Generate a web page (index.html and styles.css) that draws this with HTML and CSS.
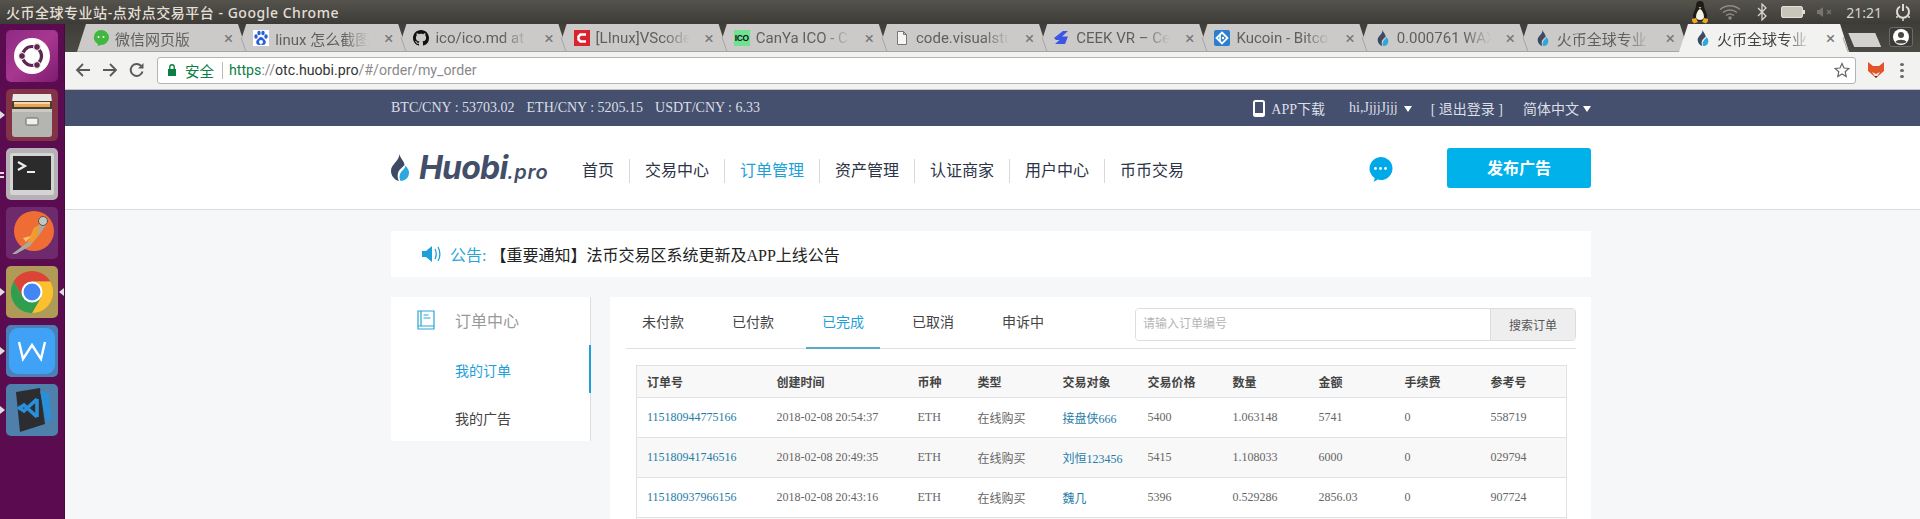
FILE: index.html
```html
<!DOCTYPE html>
<html lang="zh-CN">

<head>
  <meta charset="UTF-8">
  <meta name="viewport" content="width=device-width, initial-scale=1.0">
  <title>火币全球专业站-点对点交易平台</title>
  <link rel="stylesheet" href="styles.css">
</head>

<body>
  <svg class="defs" width="0" height="0">
    <symbol id="flame" viewBox="0 0 16 24">
      <path fill="#3e4a64" d="M7.500 0C8 4 12 6 12 10 10 12 6.500 14 6 18c-.2 2 0 4 1 6-4-1-7-5-7-9C0 9 7 7 7.500 0z" />
      <path fill="#2ea7e0" d="M13 10.500c1.500 2 3 3.500 3 6 0 4.500-3 7.500-7.500 7.500-1-2-1.300-4-.5-6 1-3 4-4 5-7.500z" />
    </symbol>
  </svg>

  <header class="desk-bar">
    <span class="desk-title">火币全球专业站-点对点交易平台 - Google Chrome</span>
    <div class="indicators">
      <svg class="ind-tux" width="18" height="24" viewBox="0 0 18 24">
        <path fill="#1c1c1c" d="M9 1c-3 0-4 2-4 5 0 3-3 6-3 10 0 3 2 5 7 5s7-2 7-5c0-4-3-7-3-10 0-3-1-5-4-5z" />
        <path fill="#f4f1e6" d="M9 9c-2 1-4 4-4 8 0 2 2 3 4 3s4-1 4-3c0-4-2-7-4-8z" />
        <path fill="#f0a81c" d="M1 19l4-1 2 4-4 1.500L1 21zM17 19l-4-1-2 4 4 1.500 2-2.500zM7.500 7h3L9 9z" />
      </svg>
      <svg class="ind-wifi" width="22" height="16" viewBox="0 0 22 16" fill="none" stroke="#8f8d86" stroke-width="1.500">
        <path d="M1 5.500c6-5 14-5 20 0M4 8.500c4-3.500 10-3.500 14 0M7 11.500c2.500-2 5.500-2 8 0" />
        <circle cx="11" cy="14" r="1" fill="#8f8d86" />
      </svg>
      <svg class="ind-bt" width="10" height="18" viewBox="0 0 10 18" fill="none" stroke="#d8d5cc" stroke-width="1.300">
        <path d="M1 5l8 8-4 4V1l4 4-8 8" />
      </svg>
      <span class="ind-battery"></span>
      <svg class="ind-sound" width="18" height="12" viewBox="0 0 18 12" fill="#77756e">
        <path d="M1 4h2l4-3v10L3 8H1z" />
        <path d="M11 4l4 4m0-4l-4 4" stroke="#77756e" stroke-width="1.200" />
      </svg>
      <span class="ind-time">21:21</span>
      <svg class="ind-power" width="16" height="18" viewBox="0 0 16 18" fill="none" stroke="#dfdbd2" stroke-width="2">
        <path d="M5 3.500a6 6 0 1 0 6 0M8 1v7" />
        <path d="M1 14h2M13 14h2M8 15v3" stroke-width="1.500" />
      </svg>
    </div>
  </header>

  <div class="desk">
    <nav class="launcher">
      <div class="tile tile-ubuntu">
        <svg width="40" height="40" viewBox="0 0 40 40">
          <circle cx="20" cy="20" r="18" fill="#fff" />
          <circle cx="20" cy="20" r="9.500" fill="none" stroke="#5e2750" stroke-width="3.200" />
          <circle cx="25" cy="11" r="3.400" fill="#5e2750" stroke="#fff" />
          <circle cx="25" cy="29" r="3.400" fill="#5e2750" stroke="#fff" />
          <circle cx="10" cy="20" r="3.400" fill="#5e2750" stroke="#fff" />
        </svg>
      </div>
      <div class="tile tile-files pip-left">
        <svg width="44" height="46" viewBox="0 0 44 46">
          <path fill="#e9e9e6" d="M3 2h38l1 8H2z" />
          <path fill="#4a3c30" d="M2 9h40v8H2z" />
          <path fill="#e8a558" d="M4 11h36v4H4z" />
          <path fill="#f6d9a8" d="M4 10h36v2H4z" />
          <path fill="#b4b4b0" d="M2 17h40v25a3 3 0 0 1-3 3H5a3 3 0 0 1-3-3z" />
          <path fill="#c9c9c5" d="M2 17h40v3H2z" />
          <rect x="16" y="26" width="12" height="7" rx="1" fill="#eee" stroke="#666" />
        </svg>
      </div>
      <div class="tile tile-term pip-dots">
        <svg width="46" height="44" viewBox="0 0 46 44">
          <rect x="1" y="1" width="44" height="42" rx="2" fill="#d4d4d2" />
          <rect x="4" y="4" width="38" height="34" fill="#2b2b2b" />
          <path d="M9 10l7 4-7 4" fill="none" stroke="#eee" stroke-width="2.200" />
          <path d="M18 20h8" stroke="#eee" stroke-width="2" />
        </svg>
      </div>
      <div class="tile tile-postman">
        <svg width="46" height="46" viewBox="0 0 46 46">
          <circle cx="25" cy="21" r="20" fill="#ef6c35" />
          <path d="M3 44l16-12 6-14 9-6 3 3-7 10-9 11-14 8z" fill="#a9a9a4" />
          <path d="M19 32l6-14 6-3-3 12-5 6z" fill="#f39a2b" />
          <path d="M14 28l8-2-5 6z" fill="#f9c36a" />
          <circle cx="34" cy="11" r="4.500" fill="#c6c6c0" stroke="#555" />
        </svg>
      </div>
      <div class="tile tile-chrome pip-left pip-right">
        <svg width="46" height="46" viewBox="0 0 48 48">
          <path fill="#db4437" d="M24 13h19.050A22 22 0 0 0 4.950 13L14.500 29.500z" />
          <path fill="#fbc02d" d="M43.050 13A22 22 0 0 1 24 46l9.500-16.500L24 13z" />
          <path fill="#2f9e4f" d="M24 46A22 22 0 0 1 4.950 13l9.550 16.500h19z" />
          <circle cx="24" cy="24" r="11" fill="#fff" />
          <circle cx="24" cy="24" r="8.800" fill="#4285f4" />
        </svg>
      </div>
      <div class="tile tile-wps pip-left">
        <svg width="48" height="48" viewBox="0 0 48 48">
          <rect x="1" y="1" width="46" height="46" rx="9" fill="#3fa2f7" />
          <path d="M11 15l4 17 9-14 9 14 4-17" fill="none" stroke="#fff" stroke-width="2.400" />
        </svg>
      </div>
      <div class="tile tile-code pip-left">
        <svg width="44" height="48" viewBox="0 0 44 48">
          <path fill="#2b2d30" d="M6 6l24-4 5 36-25 8z" />
          <path fill="#2a8fdb" d="M30 5l9 3 2 26-27 5 22-4z" />
          <path fill="none" stroke="#2a8fdb" stroke-width="3.600" d="M27 13L14 25l-6-4M27 31L14 19l-6 4M27 13v18" />
        </svg>
      </div>
    </nav>

    <div class="chrome">
      <div class="tabstrip">
        <div class="tab">
          <svg class="favicon" viewBox="0 0 16 16">
            <path fill="#3fb83f" d="M8 0a8 7.500 0 0 1 0 15l-3.500 1 .5-2A8 7.500 0 0 1 8 0z" />
            <circle cx="5.500" cy="7" r="1" fill="#fff" /><circle cx="10.500" cy="7" r="1" fill="#fff" />
          </svg>
          <span class="tab-title">微信网页版</span><span class="tab-close">×</span>
        </div>
        <div class="tab">
          <svg class="favicon" viewBox="0 0 16 16">
            <rect width="16" height="16" fill="#fff" />
            <g fill="#2b5fd9">
              <ellipse cx="3" cy="6.500" rx="1.700" ry="2.200" /><ellipse cx="6" cy="3" rx="1.700" ry="2.300" />
              <ellipse cx="10" cy="3" rx="1.700" ry="2.300" /><ellipse cx="13" cy="6.500" rx="1.700" ry="2.200" />
              <path d="M8 7c2 0 2.500 2 4 3 1.500 1.500 1 5-2 5-1 0-1.500-.5-2-.5s-1 .5-2 .5c-3 0-3.500-3.500-2-5 1.500-1 2-3 4-3z" />
            </g>
            <ellipse cx="8" cy="12" rx="2" ry="2" fill="#fff" />
          </svg>
          <span class="tab-title">linux 怎么截图</span><span class="tab-close">×</span>
        </div>
        <div class="tab">
          <svg class="favicon" viewBox="0 0 16 16">
            <path fill="#111" d="M8 0C3.580 0 0 3.580 0 8c0 3.540 2.290 6.530 5.470 7.590.4.070.55-.17.55-.38 0-.19-.01-.82-.01-1.490-2.010.37-2.530-.49-2.690-.94-.09-.23-.48-.94-.82-1.130-.28-.15-.68-.52-.01-.53.630-.01 1.080.58 1.230.82.720 1.210 1.870.87 2.330.66.070-.52.28-.87.51-1.070-1.780-.2-3.640-.89-3.640-3.950 0-.87.31-1.590.82-2.150-.08-.2-.36-1.020.08-2.120 0 0 .67-.21 2.200.82.640-.18 1.320-.27 2-.27.680 0 1.360.09 2 .27 1.530-1.040 2.200-.82 2.200-.82.44 1.100.16 1.920.08 2.120.51.56.82 1.270.82 2.150 0 3.070-1.870 3.750-3.650 3.950.29.25.54.73.54 1.480 0 1.070-.01 1.930-.01 2.200 0 .21.15.46.55.38A8.013 8.013 0 0 0 16 8c0-4.420-3.580-8-8-8z" />
          </svg>
          <span class="tab-title">ico/ico.md at m</span><span class="tab-close">×</span>
        </div>
        <div class="tab">
          <svg class="favicon" viewBox="0 0 16 16">
            <rect width="16" height="16" fill="#d9232e" />
            <path d="M12 4.500H6.500L4.500 6.500v3l2 2H12" fill="none" stroke="#fff" stroke-width="2.500" />
          </svg>
          <span class="tab-title">[LInux]VScode</span><span class="tab-close">×</span>
        </div>
        <div class="tab">
          <span class="favicon fav-ico">ICO</span>
          <span class="tab-title">CanYa ICO - CA</span><span class="tab-close">×</span>
        </div>
        <div class="tab">
          <svg class="favicon" viewBox="0 0 16 16">
            <path d="M3.500 1.500h6l3 3v10h-9zM9.500 1.500v3h3" fill="#f5f5f5" stroke="#777" />
          </svg>
          <span class="tab-title">code.visualstu</span><span class="tab-close">×</span>
        </div>
        <div class="tab">
          <svg class="favicon" viewBox="0 0 16 16">
            <path fill="#3b55e6" d="M9 1h5L8 6.500h6L11 14H1l4.500-4H2L0 8z" />
          </svg>
          <span class="tab-title">CEEK VR – Cele</span><span class="tab-close">×</span>
        </div>
        <div class="tab">
          <svg class="favicon" viewBox="0 0 16 16">
            <rect width="16" height="16" rx="2" fill="#2a7fd0" />
            <path d="M8 2.500L13.500 8 8 13.500 2.500 8z" fill="none" stroke="#fff" stroke-width="1.800" />
            <path d="M6 5v6" stroke="#fff" stroke-width="1.600" />
            <circle cx="9" cy="8" r="1.200" fill="#fff" />
          </svg>
          <span class="tab-title">Kucoin - Bitcoi</span><span class="tab-close">×</span>
        </div>
        <div class="tab">
          <svg class="favicon"><use href="#flame" /></svg>
          <span class="tab-title">0.000761 WAX/</span><span class="tab-close">×</span>
        </div>
        <div class="tab">
          <svg class="favicon"><use href="#flame" /></svg>
          <span class="tab-title">火币全球专业</span><span class="tab-close">×</span>
        </div>
        <div class="tab tab-active">
          <svg class="favicon"><use href="#flame" /></svg>
          <span class="tab-title">火币全球专业</span><span class="tab-close">×</span>
        </div>
        <span class="tab-new"></span>
        <span class="profile">
          <svg width="16" height="16" viewBox="0 0 16 16">
            <circle cx="8" cy="8" r="8" fill="#fff" />
            <circle cx="8" cy="6" r="3" fill="#4a4842" />
            <path d="M2.500 13c1-3 10-3 11 0-3 2-8 2-11 0z" fill="#4a4842" />
          </svg>
        </span>
      </div>

      <div class="toolbar">
        <svg class="tool" width="16" height="16" viewBox="0 0 16 16" fill="none" stroke="#5a5a5a" stroke-width="1.800">
          <path d="M15 8H2M8 2L2 8l6 6" />
        </svg>
        <svg class="tool" width="16" height="16" viewBox="0 0 16 16" fill="none" stroke="#5a5a5a" stroke-width="1.800">
          <path d="M1 8h13M8 2l6 6-6 6" />
        </svg>
        <svg class="tool" width="16" height="16" viewBox="0 0 16 16" fill="none" stroke="#5a5a5a" stroke-width="2">
          <path d="M13.500 9.500A6 6 0 1 1 12 3.800" />
          <path d="M14.500 1v5.500H9" fill="#5a5a5a" stroke="none" />
        </svg>
        <div class="omnibox">
          <svg width="10" height="14" viewBox="0 0 10 14">
            <path fill="#0b8043" d="M1 6h8v7H1z" />
            <path d="M2.800 6V4a2.200 2.200 0 0 1 4.400 0v2" fill="none" stroke="#0b8043" stroke-width="1.400" />
          </svg>
          <span class="secure">安全</span>
          <span class="omni-line"></span>
          <span class="url"><span class="url-scheme">https</span>://<span class="url-host">otc.huobi.pro</span>/#/order/my_order</span>
          <svg class="omni-star" width="16" height="16" viewBox="0 0 16 16">
            <path d="M8 1.500l2 4.500 4.800.5-3.600 3.200 1 4.800L8 12l-4.200 2.500 1-4.800L1.200 6.500 6 6z" fill="none" stroke="#666" stroke-width="1.200" />
          </svg>
        </div>
        <svg class="ext-fox" width="18" height="18" viewBox="0 0 18 18">
          <path fill="#e0552a" d="M1 1l5 4h6l5-4v9l-8 7-8-7z" />
          <path fill="#f6e8dc" d="M5 11l4 2 4-2-4 6z" />
          <path fill="#40241a" d="M7.500 15h3L9 17z" />
        </svg>
        <span class="chrome-menu"><i></i><i></i><i></i></span>
      </div>

      <main class="page">
        <div class="rate-bar">
          <div class="wrap rate-inner">
            <div class="rates">
              <span>BTC/CNY : 53703.02</span>
              <span>ETH/CNY : 5205.15</span>
              <span>USDT/CNY : 6.33</span>
            </div>
            <div class="user-links">
              <a class="app-link">
                <svg width="12" height="17" viewBox="0 0 12 17">
                  <rect x="1" y="1" width="10" height="15" rx="1.500" fill="none" stroke="#fff" stroke-width="2" />
                  <path d="M1 13h10v2H1z" fill="#fff" />
                </svg>
                APP下载
              </a>
              <a class="user-name">hi,JjjjJjjj<i class="caret"></i></a>
              <a class="logout">[ 退出登录 ]</a>
              <a class="lang">简体中文<i class="caret"></i></a>
            </div>
          </div>
        </div>

        <div class="site-head">
          <div class="wrap head-inner">
            <div class="logo">
              <svg class="logo-flame"><use href="#flame" /></svg>
              <span class="logo-name">Huobi</span><span class="logo-pro">.pro</span>
            </div>
            <ul class="main-nav">
              <li>首页</li>
              <li>交易中心</li>
              <li class="active">订单管理</li>
              <li>资产管理</li>
              <li>认证商家</li>
              <li>用户中心</li>
              <li>币币交易</li>
            </ul>
            <svg class="chat-icon" width="25" height="25" viewBox="0 0 25 25">
              <path fill="#00a9e8" d="M12.500 0a12 11.500 0 0 1 0 23c-1 0-2-.1-3-.4-1 1-2.500 1.800-4 2 .8-1 1.200-2.200 1.200-3.500A11.500 11.500 0 0 1 12.500 0z" />
              <circle cx="7.500" cy="11.500" r="1.400" fill="#fff" />
              <circle cx="12.500" cy="11.500" r="1.400" fill="#fff" />
              <circle cx="17.500" cy="11.500" r="1.400" fill="#fff" />
            </svg>
            <button class="publish">发布广告</button>
          </div>
        </div>

        <div class="wrap notice">
          <svg width="20" height="16" viewBox="0 0 20 16">
            <path fill="#1d9fd8" d="M0 5h4l6-5v16l-6-5H0z" />
            <path fill="none" stroke="#1d9fd8" stroke-width="1.300" d="M13 3c1.500 3 1.500 7 0 10M16 1c2.500 4 2.500 10 0 14" />
          </svg>
          <span class="notice-label">公告:</span>
          <span class="notice-text">【重要通知】法币交易区系统更新及APP上线公告</span>
        </div>

        <div class="wrap columns">
          <aside class="side">
            <div class="side-title">
              <svg width="18" height="20" viewBox="0 0 18 20" fill="none" stroke="#2aa6d6" stroke-width="1.200">
                <path d="M1 1h16v15H1zM1 16v3h16v-3M4 1v15M6.500 5h5M6.500 8h7" />
              </svg>
              订单中心
            </div>
            <a class="side-item active">我的订单</a>
            <a class="side-item">我的广告</a>
          </aside>

          <section class="orders">
            <div class="order-top">
              <ul class="order-tabs">
                <li>未付款</li>
                <li>已付款</li>
                <li class="active">已完成</li>
                <li>已取消</li>
                <li>申诉中</li>
              </ul>
              <div class="search">
                <input class="search-input" type="text" placeholder="请输入订单编号">
                <button class="search-btn">搜索订单</button>
              </div>
            </div>

            <table class="order-table">
              <colgroup>
                <col class="c-id"><col class="c-time"><col class="c-coin"><col class="c-std"><col class="c-std"><col class="c-std">
                <col class="c-num"><col class="c-num"><col class="c-num"><col class="c-num">
              </colgroup>
              <thead>
                <tr>
                  <th>订单号</th><th>创建时间</th><th>币种</th><th>类型</th><th>交易对象</th>
                  <th>交易价格</th><th>数量</th><th>金额</th><th>手续费</th><th>参考号</th>
                </tr>
              </thead>
              <tbody>
                <tr>
                  <td><a>115180944775166</a></td><td>2018-02-08 20:54:37</td><td>ETH</td><td>在线购买</td><td><a>接盘侠666</a></td>
                  <td>5400</td><td>1.063148</td><td>5741</td><td>0</td><td>558719</td>
                </tr>
                <tr>
                  <td><a>115180941746516</a></td><td>2018-02-08 20:49:35</td><td>ETH</td><td>在线购买</td><td><a>刘恒123456</a></td>
                  <td>5415</td><td>1.108033</td><td>6000</td><td>0</td><td>029794</td>
                </tr>
                <tr>
                  <td><a>115180937966156</a></td><td>2018-02-08 20:43:16</td><td>ETH</td><td>在线购买</td><td><a>魏几</a></td>
                  <td>5396</td><td>0.529286</td><td>2856.03</td><td>0</td><td>907724</td>
                </tr>
                <tr class="row-cut">
                  <td></td><td></td><td></td><td></td><td></td><td></td><td></td><td></td><td></td><td></td>
                </tr>
              </tbody>
            </table>
          </section>
        </div>
      </main>
    </div>
  </div>
</body>

</html>
```

FILE: styles.css
```css
html {
  box-sizing: border-box;
  font-size: 14px;
}

*,
*:after,
*:before {
  box-sizing: inherit;
}

body {
  margin: 0;
  width: 1920px;
  height: 519px;
  overflow: hidden;
  display: flex;
  flex-direction: column;
  font-family: "Liberation Serif", "Noto Sans CJK SC", serif;
  color: #333;
}

ul {
  list-style: none;
  margin: 0;
  padding: 0;
}

.defs {
  position: absolute;
}

/* ubuntu top bar */
.desk-bar {
  flex: none;
  height: 24px;
  padding: 0 9px 0 6px;
  display: flex;
  align-items: center;
  justify-content: space-between;
  background: linear-gradient(#55534c, #3c3b37);
  color: #e3dfd6;
}

.desk-title {
  font-family: "Noto Sans", "Noto Sans CJK SC", sans-serif;
  font-size: 14px;
  font-weight: 500;
  letter-spacing: .52px;
}

.indicators {
  display: flex;
  align-items: center;
}

.ind-wifi {
  margin-left: 10px;
}

.ind-bt {
  margin-left: 16px;
}

.ind-battery {
  margin-left: 14px;
  width: 22px;
  height: 12px;
  border: 1px solid #e3dfd6;
  border-radius: 2px;
  background: #c9c5ba;
  position: relative;
}

.ind-battery:after {
  content: "";
  position: absolute;
  right: -3px;
  top: 3px;
  width: 2px;
  height: 4px;
  background: #e3dfd6;
}

.ind-sound {
  margin-left: 13px;
}

.ind-time {
  margin-left: 12px;
  font-family: "Noto Sans", sans-serif;
  font-size: 14px;
  color: #d8d5cc;
}

.ind-power {
  margin-left: 13px;
}

.desk {
  flex: 1;
  display: flex;
  min-height: 0;
}

/* launcher */
.launcher {
  flex: none;
  width: 65px;
  padding: 6px 0 0 6px;
  display: flex;
  flex-direction: column;
  gap: 7px;
  background: #5b0c50;
  border-right: 1px solid #47093f;
}

.tile {
  position: relative;
  width: 52px;
  height: 52px;
  border-radius: 5px;
  display: flex;
  align-items: center;
  justify-content: center;
}

.tile-ubuntu {
  background: linear-gradient(135deg, #8e2a84, #a8378f 50%, #7c1b70);
}

.tile-files {
  background: #823346;
}

.tile-term {
  background: #b6b1b6;
}

.tile-postman {
  background: #6d2a6c;
}

.tile-chrome {
  background: #b09a58;
}

.tile-wps {
  background: #4c7fb6;
}

.tile-code {
  background: #4f80ab;
}

.pip-left:before {
  content: "";
  position: absolute;
  left: -6px;
  top: 22px;
  border: 4px solid transparent;
  border-left: 5px solid #ddd;
}

.pip-right:after {
  content: "";
  position: absolute;
  right: -6px;
  top: 22px;
  border: 4px solid transparent;
  border-right: 5px solid #ddd;
}

.pip-dots:before {
  content: "";
  position: absolute;
  left: -6px;
  top: 24px;
  width: 4px;
  height: 6px;
  border-top: 2px solid #ddd;
  border-bottom: 2px solid #ddd;
}

.chrome {
  flex: 1;
  min-width: 0;
  display: flex;
  flex-direction: column;
}

/* tabs */
.tabstrip {
  flex: none;
  height: 28px;
  padding-left: 12px;
  display: flex;
  background: linear-gradient(#3f3e39, #4b4a45);
  font-family: Roboto, "Noto Sans CJK SC", sans-serif;
}

.tab {
  position: relative;
  flex: none;
  width: 170px;
  margin-right: -9.800px;
  padding: 0 0 0 16px;
  display: flex;
  align-items: center;
}

.tab:before {
  content: "";
  position: absolute;
  inset: 0;
  background: #cbcac8;
  border-bottom: 1px solid #a5a5a3;
  clip-path: polygon(0 100%, 9px 0, calc(100% - 9px) 0, 100% 100%);
}

.tab:after {
  content: "";
  position: absolute;
  z-index: 1;
  right: 3px;
  bottom: 0;
  width: 1px;
  height: 15px;
  background: #a5a5a3;
  transform: rotate(-19deg);
}

.tab-active:before {
  background: #f2f2f1;
  border-bottom: 0;
}

.tab-active {
  z-index: 2;
}

.favicon {
  position: relative;
  z-index: 1;
  flex: none;
  width: 16px;
  height: 16px;
}

.fav-ico {
  background: #6ee28f;
  color: #111;
  font-family: "Liberation Sans", sans-serif;
  font-size: 8.500px;
  font-weight: 700;
  line-height: 16px;
  letter-spacing: -.4px;
  text-align: center;
  white-space: nowrap;
}

.tab-title {
  position: relative;
  z-index: 1;
  margin-left: 6px;
  width: 94px;
  white-space: nowrap;
  font-size: 15px;
  color: #5f5f5f;
  -webkit-mask-image: linear-gradient(to right, #000 72%, transparent);
  mask-image: linear-gradient(to right, #000 72%, transparent);
}

.tab-active .tab-title {
  color: #444;
}

.tab-close {
  position: relative;
  z-index: 1;
  margin-left: 15px;
  font-size: 17px;
  line-height: 1;
  color: #777;
}

.tab-new {
  flex: none;
  margin: 9px 0 0 9px;
  width: 33px;
  height: 14px;
  background: #d3d2cf;
  clip-path: polygon(0 0, 27px 0, 100% 100%, 6px 100%);
}

.profile {
  flex: none;
  margin: 3px 0 5px 8px;
  width: 24px;
  display: flex;
  align-items: center;
  justify-content: center;
  background: #3c3b37;
  border: 1px solid #6b6a65;
  border-radius: 3px;
}

/* address bar */
.toolbar {
  flex: none;
  height: 38px;
  padding: 5px 0 6px 10px;
  display: flex;
  align-items: center;
  background: #f2f2f1;
  border-bottom: 1px solid #c3c3c1;
}

.tool {
  flex: none;
  margin-right: 11px;
}

.omnibox {
  flex: 1;
  height: 27px;
  margin-left: 1px;
  padding: 0 5px 0 9px;
  display: flex;
  align-items: center;
  background: #fff;
  border: 1px solid #b4b4b2;
  border-radius: 3px;
  font-family: Roboto, "Noto Sans CJK SC", sans-serif;
  font-size: 14.500px;
  color: #8a8a8a;
}

.secure {
  margin-left: 8px;
  color: #0b8043;
}

.omni-line {
  width: 1px;
  height: 17px;
  margin: 0 6px 0 8px;
  background: #bbb;
}

.url {
  flex: 1;
  font-size: 14.200px;
}

.url-scheme {
  color: #0b8043;
}

.url-host {
  color: #333;
}

.ext-fox {
  flex: none;
  margin-left: 11px;
}

.chrome-menu {
  flex: none;
  width: 4px;
  margin: 0 16px 0 15px;
  display: flex;
  flex-direction: column;
  gap: 3px;
}

.chrome-menu i {
  height: 3px;
  background: #666;
  border-radius: 50%;
}

/* huobi page */
.page {
  flex: 1;
  min-height: 0;
  overflow: hidden;
  padding-right: 3px;
  background: #f6f7f8;
}

.wrap {
  width: 1200px;
  margin-left: auto;
  margin-right: auto;
}

.rate-bar {
  margin-right: -3px;
  padding-right: 3px;
  height: 36px;
  background: #44506e;
  color: #dcdfe6;
}

.rate-inner {
  height: 100%;
  display: flex;
  align-items: center;
  justify-content: space-between;
}

.rates {
  display: flex;
  gap: 12px;
}

.user-links {
  display: flex;
  align-items: center;
}

.user-links a {
  display: flex;
  align-items: center;
}

.app-link svg {
  margin-right: 6px;
}

.user-name {
  margin-left: 24px;
}

.logout {
  margin-left: 19px;
}

.lang {
  margin-left: 20px;
}

.caret {
  margin: 2px 0 0 6px;
  border: 4.500px solid transparent;
  border-top: 6px solid #fff;
  border-bottom: 0;
}

.lang .caret {
  margin-left: 4px;
}

.site-head {
  margin-right: -3px;
  padding-right: 3px;
  height: 84px;
  background: #fff;
  border-bottom: 1px solid #dcdcdc;
}

.head-inner {
  height: 100%;
  display: flex;
  align-items: center;
}

.logo {
  width: 176px;
  display: flex;
  align-items: baseline;
  color: #434e69;
  font-family: Inter, sans-serif;
}

.logo-flame {
  width: 18px;
  height: 27px;
  margin-right: 10px;
  align-self: center;
}

.logo-name {
  font-size: 32px;
  font-weight: 700;
  letter-spacing: -.8px;
  font-style: italic;
}

.logo-pro {
  font-size: 20px;
  font-weight: 600;
  font-style: italic;
  letter-spacing: .6px;
}

.main-nav {
  display: flex;
  margin-top: 6px;
}

.main-nav li {
  height: 24px;
  padding: 0 15px;
  border-left: 1px solid #d8d8d8;
  font-size: 16px;
  line-height: 24px;
  color: #2c3446;
}

.main-nav li:first-child {
  border-left: 0;
}

.main-nav .active {
  color: #1d9fd8;
}

.chat-icon {
  margin: 4px 0 0 auto;
}

.publish {
  width: 144px;
  height: 40px;
  margin: 0 0 0 54px;
  padding: 0 0 2px;
  border: 0;
  border-radius: 3px;
  background: #00b1ea;
  color: #fff;
  font-family: inherit;
  font-size: 16px;
  font-weight: 700;
}

.notice {
  height: 46px;
  margin-top: 21px;
  padding-left: 31px;
  display: flex;
  align-items: center;
  background: #fff;
  font-size: 16px;
  color: #222;
}

.notice-label {
  margin: 0 4px 0 8px;
  color: #2ba6d8;
}

.columns {
  margin-top: 20px;
  display: flex;
  align-items: flex-start;
}

.side {
  flex: none;
  width: 200px;
  background: #fff;
  border-right: 1px solid #dcdcdc;
  font-size: 14px;
}

.side-title {
  height: 48px;
  padding: 0 0 2px 26px;
  display: flex;
  align-items: center;
  gap: 20px;
  font-size: 16px;
  color: #999;
}

.side-item {
  position: relative;
  display: block;
  height: 48px;
  padding: 3px 0 0 64px;
  font-size: 14px;
  line-height: 48px;
  color: #444;
}

.side-item.active {
  color: #1d9fd8;
}

.side-item.active:after {
  content: "";
  position: absolute;
  right: -1px;
  top: 0;
  width: 2px;
  height: 100%;
  background: #1d9fd8;
}

.orders {
  flex: 1;
  margin-left: 19px;
  padding: 0 15px 0 16px;
  height: 300px;
  background: #fff;
}

.order-top {
  height: 52px;
  display: flex;
  justify-content: space-between;
  border-bottom: 1px solid #dde0e4;
}

.order-tabs {
  display: flex;
  gap: 16px;
}

.order-tabs li {
  width: 74px;
  height: 52px;
  padding-top: 16px;
  text-align: center;
  font-size: 14px;
  line-height: 20px;
  color: #444;
}

.order-tabs .active {
  color: #1d9fd8;
  border-bottom: 2px solid #5ea9cb;
}

.search {
  display: flex;
  height: 33px;
  margin-top: 11px;
  width: 441px;
  border: 1px solid #ddd;
  border-radius: 4px;
  overflow: hidden;
}

.search-input {
  flex: 1;
  min-width: 0;
  padding: 0 7px;
  border: 0;
  outline: 0;
  font-family: inherit;
  font-size: 12px;
}

.search-input::placeholder {
  color: #b5b5b5;
}

.search-btn {
  width: 85px;
  border: 0;
  border-left: 1px solid #ddd;
  background: #eee;
  color: #555;
  font-family: inherit;
  font-size: 12px;
}

.order-table {
  width: 930px;
  margin: 16px 0 0 10px;
  border-collapse: collapse;
  table-layout: fixed;
  font-size: 12px;
  color: #666;
}

.c-id {
  width: 130px;
}

.c-time {
  width: 141px;
}

.c-coin {
  width: 60px;
}

.c-std {
  width: 85px;
}

.c-num {
  width: 86px;
}

.order-table th,
.order-table td {
  padding: 0 10px;
  text-align: left;
  font-weight: 400;
}

.order-table th {
  height: 32px;
  background: #f8f8f8;
  font-weight: 700;
  color: #444;
}

.order-table td {
  height: 40px;
}

.order-table tr {
  border: 1px solid #dfe1e4;
}

.order-table tbody tr:nth-child(even) {
  background: #f8f8f8;
}

.order-table a {
  color: #1f7ca8;
}
```
